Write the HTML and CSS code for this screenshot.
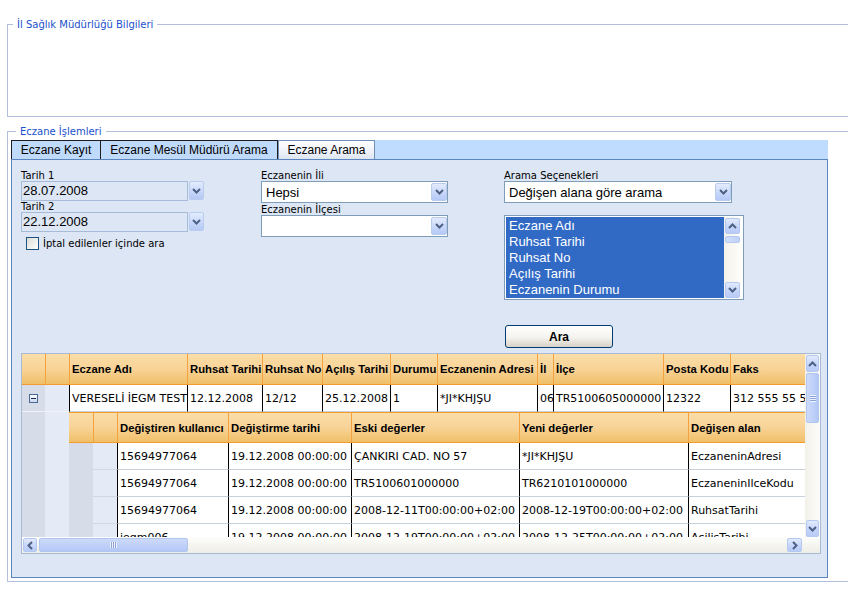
FILE: index.html
```html
<!DOCTYPE html>
<html lang="tr">
<head>
<meta charset="utf-8">
<title>Eczane Arama</title>
<link rel="stylesheet" href="styles.css">
</head>
<body>
<div class="page">
  <fieldset class="box">
    <legend>İl Sağlık Müdürlüğü Bilgileri</legend>
    <div class="box-top-body"></div>
  </fieldset>

  <fieldset class="box box-main">
    <legend>Eczane İşlemleri</legend>
    <div class="tabs">
      <div class="tab tab-kayit">Eczane Kayıt</div>
      <div class="tab tab-mesul">Eczane Mesül Müdürü Arama</div>
      <div class="tab tab-arama">Eczane Arama</div>
    </div>
    <div class="panel">
      <div class="form">
        <div class="col col1">
          <div class="lbl">Tarih 1</div>
          <div class="date-row">
            <div class="date-input">28.07.2008</div>
            <div class="ddbtn date-btn"><svg width="9" height="6" viewBox="0 0 9 6"><path d="M1 1l3.5 3.5L8 1" fill="none" stroke="#4D6185" stroke-width="2"/></svg></div>
          </div>
          <div class="lbl">Tarih 2</div>
          <div class="date-row">
            <div class="date-input">22.12.2008</div>
            <div class="ddbtn date-btn"><svg width="9" height="6" viewBox="0 0 9 6"><path d="M1 1l3.5 3.5L8 1" fill="none" stroke="#4D6185" stroke-width="2"/></svg></div>
          </div>
          <div class="check-row">
            <span class="checkbox"></span>
            <span class="lbl">İptal edilenler içinde ara</span>
          </div>
        </div>

        <div class="col col2">
          <div class="lbl">Eczanenin İli</div>
          <div class="sel sel-il">
            <span class="sel-text">Hepsi</span>
            <div class="ddbtn sel-btn"><svg width="9" height="6" viewBox="0 0 9 6"><path d="M1 1l3.5 3.5L8 1" fill="none" stroke="#4D6185" stroke-width="2"/></svg></div>
          </div>
          <div class="lbl lbl-gap">Eczanenin İlçesi</div>
          <div class="sel sel-il">
            <span class="sel-text"></span>
            <div class="ddbtn sel-btn"><svg width="9" height="6" viewBox="0 0 9 6"><path d="M1 1l3.5 3.5L8 1" fill="none" stroke="#4D6185" stroke-width="2"/></svg></div>
          </div>
        </div>

        <div class="col col3">
          <div class="lbl">Arama Seçenekleri</div>
          <div class="sel sel-arama">
            <span class="sel-text">Değişen alana göre arama</span>
            <div class="ddbtn sel-btn"><svg width="9" height="6" viewBox="0 0 9 6"><path d="M1 1l3.5 3.5L8 1" fill="none" stroke="#4D6185" stroke-width="2"/></svg></div>
          </div>
          <div class="listbox">
            <ul class="list-items">
              <li>Eczane Adı</li>
              <li>Ruhsat Tarihi</li>
              <li>Ruhsat No</li>
              <li>Açılış Tarihi</li>
              <li>Eczanenin Durumu</li>
            </ul>
            <div class="lb-scroll">
              <div class="sbtn lb-btn"><svg width="9" height="6" viewBox="0 0 9 6"><path d="M1 5l3.5-3.5L8 5" fill="none" stroke="#4D6185" stroke-width="2"/></svg></div>
              <div class="lb-thumb"></div>
              <div class="lb-track"></div>
              <div class="sbtn lb-btn"><svg width="9" height="6" viewBox="0 0 9 6"><path d="M1 1l3.5 3.5L8 1" fill="none" stroke="#4D6185" stroke-width="2"/></svg></div>
            </div>
          </div>
          <button class="ara-btn" type="button">Ara</button>
        </div>
      </div>

      <div class="grid">
        <div class="viewport">
          <table class="dg dg-main">
            <colgroup>
              <col class="w23"><col class="w24"><col class="w118"><col class="w75"><col class="w60"><col class="w68"><col class="w47"><col class="w100"><col class="w16"><col class="w110"><col class="w67"><col class="w100">
            </colgroup>
            <thead>
              <tr>
                <th class="first"></th><th></th><th>Eczane Adı</th><th>Ruhsat Tarihi</th><th>Ruhsat No</th><th>Açılış Tarihi</th><th>Durumu</th><th>Eczanenin Adresi</th><th>İl</th><th>İlçe</th><th>Posta Kodu</th><th>Faks</th>
              </tr>
            </thead>
            <tbody>
              <tr class="row-main">
                <td class="g0"><span class="minus"></span></td><td class="g1"></td>
                <td class="cell">VERESELİ İEGM TEST</td><td class="cell">12.12.2008</td><td class="cell">12/12</td><td class="cell">25.12.2008</td><td class="cell">1</td><td class="cell">*JI*KHJŞU</td><td class="cell">06</td><td class="cell">TR5100605000000</td><td class="cell">12322</td><td class="cell">312 555 55 55</td>
              </tr>
              <tr>
                <td class="g0 gfill"></td><td class="g1 gfill"></td>
                <td class="nest-cell" colspan="10">
                  <table class="dg dg-nested">
                    <colgroup>
                      <col class="w24"><col class="w24"><col class="w111"><col class="w123"><col class="w168"><col class="w169"><col class="w120">
                    </colgroup>
                    <thead>
                      <tr><th class="first"></th><th></th><th>Değiştiren kullanıcı</th><th>Değiştirme tarihi</th><th>Eski değerler</th><th>Yeni değerler</th><th>Değişen alan</th></tr>
                    </thead>
                    <tbody>
                      <tr><td class="g0"></td><td class="g1 sep"></td><td class="cell">15694977064</td><td class="cell">19.12.2008 00:00:00</td><td class="cell">ÇANKIRI CAD. NO 57</td><td class="cell">*JI*KHJŞU</td><td class="cell">EczaneninAdresi</td></tr>
                      <tr><td class="g0"></td><td class="g1 sep"></td><td class="cell">15694977064</td><td class="cell">19.12.2008 00:00:00</td><td class="cell">TR5100601000000</td><td class="cell">TR6210101000000</td><td class="cell">EczaneninIlceKodu</td></tr>
                      <tr><td class="g0"></td><td class="g1 sep"></td><td class="cell">15694977064</td><td class="cell">19.12.2008 00:00:00</td><td class="cell">2008-12-11T00:00:00+02:00</td><td class="cell">2008-12-19T00:00:00+02:00</td><td class="cell">RuhsatTarihi</td></tr>
                      <tr><td class="g0"></td><td class="g1 sep"></td><td class="cell">iegm006</td><td class="cell">19.12.2008 00:00:00</td><td class="cell">2008-12-19T00:00:00+02:00</td><td class="cell">2008-12-25T00:00:00+02:00</td><td class="cell">AcilisTarihi</td></tr>
                    </tbody>
                  </table>
                </td>
              </tr>
            </tbody>
          </table>
        </div>
        <div class="vscroll">
          <div class="sbtn v-btn"><svg width="9" height="6" viewBox="0 0 9 6"><path d="M1 5l3.5-3.5L8 5" fill="none" stroke="#4D6185" stroke-width="2"/></svg></div>
          <div class="v-thumb"><span class="grip-h"></span></div>
          <div class="v-track"></div>
          <div class="sbtn v-btn"><svg width="9" height="6" viewBox="0 0 9 6"><path d="M1 1l3.5 3.5L8 1" fill="none" stroke="#4D6185" stroke-width="2"/></svg></div>
        </div>
        <div class="hscroll">
          <div class="sbtn h-btn"><svg width="6" height="9" viewBox="0 0 6 9"><path d="M5 1L1.5 4.5 5 8" fill="none" stroke="#4D6185" stroke-width="2"/></svg></div>
          <div class="h-thumb"><span class="grip-v"></span></div>
          <div class="h-track"></div>
          <div class="sbtn h-btn h-btn-r"><svg width="6" height="9" viewBox="0 0 6 9"><path d="M1 1l3.5 3.5L1 8" fill="none" stroke="#4D6185" stroke-width="2"/></svg></div>
        </div>
        <div class="corner"></div>
      </div>
    </div>
  </fieldset>
</div>
</body>
</html>
```

FILE: styles.css
```css
* { box-sizing: border-box; }

html, body {
  margin: 0;
  padding: 0;
  background: #ffffff;
  overflow: hidden;
}

body {
  width: 848px;
  height: 602px;
  font-family: "DejaVu Sans", Verdana, sans-serif;
  font-size: 10px;
  color: #000;
}

.page {
  width: 900px;
  padding: 17px 0 0 7px;
}

/* fieldsets */
.box {
  width: 880px;
  min-width: 0;
  margin: 0;
  padding: 0;
  border: 1px solid #B4C0DB;
}

.box legend {
  margin-left: 5px;
  padding: 2px 4px 0;
  font-family: "DejaVu Sans", Verdana, sans-serif;
  font-size: 10px;
  line-height: 12px;
  color: #1B51CC;
}

.box-top-body { height: 85px; }

.box-main {
  margin-top: 7px;
  padding: 2px 0 3px 3px;
}

/* tabs */
.tabs {
  display: flex;
  width: 817px;
  height: 19px;
  background: #BFDBFE;
}

.tab {
  height: 19px;
  border: 1px solid #1E1E1E;
  border-bottom: none;
  background: #C0DAFB;
  font-family: "Liberation Sans", Arial, sans-serif;
  font-size: 12px;
  line-height: 18px;
  text-align: center;
  white-space: nowrap;
  color: #000;
}

.tab-kayit { width: 90px; }
.tab-mesul { width: 178px; margin-left: -1px; }
.tab-arama {
  width: 97px;
  border-color: #6F8FB8;
  background: linear-gradient(#FFFFFF, #EEF2F9 60%, #DDE5F2);
}

/* panel */
.panel {
  width: 817px;
  height: 419px;
  background: #DCE6F4;
  border: 1px solid #5A85BF;
  padding: 10px 0 0 9px;
}

.form { display: flex; }
.col1 { width: 240px; }
.col2 { width: 243px; }
.col3 { width: 240px; }

.lbl {
  font-size: 10px;
  line-height: 11px;
  white-space: nowrap;
}

.lbl-gap { margin-top: 1px; }

.date-row { display: flex; align-items: flex-start; }

.date-input {
  width: 167px;
  height: 20px;
  border: 1px solid #A6BBD8;
  background: #DCE6F4;
  padding-left: 1px;
  font-family: "Liberation Sans", Arial, sans-serif;
  font-size: 13px;
  line-height: 18px;
}

.ddbtn {
  display: flex;
  align-items: center;
  justify-content: center;
  border: 1px solid #B9CCEE;
  border-radius: 2px;
  background: linear-gradient(#E3ECFD, #C6D6FA 60%, #B5C9F6);
}

.date-btn {
  width: 15px;
  height: 19px;
  margin-left: 1px;
}

.check-row {
  display: flex;
  align-items: center;
  margin: 5px 0 0 5px;
  gap: 4px;
}

.checkbox {
  width: 13px;
  height: 13px;
  border: 1px solid #1C5180;
  background: linear-gradient(135deg, #DCDCD7, #FFFFFF);
}

.sel {
  display: flex;
  align-items: center;
  height: 22px;
  border: 1px solid #7F9DB9;
  background: #fff;
  padding: 0 0 0 4px;
}

.sel-il { width: 187px; }
.sel-arama { width: 228px; }

.sel-text {
  flex: 1;
  font-family: "Liberation Sans", Arial, sans-serif;
  font-size: 13px;
  white-space: nowrap;
}

.sel-btn {
  width: 16px;
  height: 18px;
}

/* listbox */
.listbox {
  display: flex;
  width: 240px;
  height: 85px;
  margin-top: 12px;
  border: 1px solid #7F9DB9;
  background: #fff;
  padding: 1px 2px 1px 1px;
}

.list-items {
  width: 218px;
  margin: 0;
  padding: 1px 0 0;
  list-style: none;
  background: #316AC5;
}

.list-items li {
  height: 16px;
  padding-left: 3px;
  font-family: "Liberation Sans", Arial, sans-serif;
  font-size: 13px;
  line-height: 16px;
  color: #fff;
  white-space: nowrap;
}

.lb-scroll {
  width: 17px;
  display: flex;
  flex-direction: column;
  padding: 1px 1px 0;
  background: linear-gradient(90deg, #F3F2EA, #FDFDFA);
}

.sbtn {
  display: flex;
  align-items: center;
  justify-content: center;
  border: 1px solid #B5C8EF;
  border-radius: 2px;
  background: linear-gradient(#E1EAFE, #C4D4FA 60%, #B8CBF7);
}

.lb-btn { height: 16px; }

.lb-thumb {
  height: 7px;
  margin-top: 2px;
  border: 1px solid #B5C8EF;
  border-radius: 2px;
  background: linear-gradient(90deg, #D2DEFB, #BFD0F8);
}

.lb-track { flex: 1; }

.ara-btn {
  display: block;
  width: 108px;
  height: 23px;
  margin: 25px 0 0 1px;
  padding: 0;
  border: 1px solid #003C74;
  border-radius: 3px;
  background: linear-gradient(#FFFFFF, #F4F3EE 55%, #D8D2C6);
  font-family: "Liberation Sans", Arial, sans-serif;
  font-size: 12px;
  font-weight: bold;
  color: #000;
}

/* grid */
.grid {
  display: grid;
  grid-template-columns: 783px 15px;
  grid-template-rows: 183px 16px;
  width: 800px;
  height: 201px;
  margin-top: 5px;
  border: 1px solid #A9BAD3;
  background: #fff;
}

.viewport {
  overflow: hidden;
  background: #E4EBF6;
}

.dg {
  border-collapse: separate;
  border-spacing: 0;
  table-layout: fixed;
}

.dg-main { width: 808px; }
.dg-nested { width: 739px; }

.w16 { width: 16px; }
.w23 { width: 23px; }
.w24 { width: 24px; }
.w47 { width: 47px; }
.w60 { width: 60px; }
.w67 { width: 67px; }
.w68 { width: 68px; }
.w75 { width: 75px; }
.w100 { width: 100px; }
.w110 { width: 110px; }
.w111 { width: 111px; }
.w118 { width: 118px; }
.w120 { width: 120px; }
.w123 { width: 123px; }
.w168 { width: 168px; }
.w169 { width: 169px; }

.dg th {
  height: 31px;
  padding: 0 1px 0 2px;
  text-align: left;
  vertical-align: middle;
  white-space: nowrap;
  overflow: hidden;
  font-family: "Liberation Sans", Arial, sans-serif;
  font-size: 11.3px;
  font-weight: bold;
  color: #000;
  background: linear-gradient(#FADDA8, #F8D397 50%, #F0BF68);
  border-left: 1px solid #F4A13E;
  border-bottom: 1px solid #F39B2C;
}

.dg-nested th { border-top: 1px solid #F39B2C; }

.dg th.first { border-left: none; }

.dg td {
  padding: 0;
  vertical-align: middle;
}

.dg td.cell {
  height: 27px;
  padding: 0 1px 0 2px;
  background: #fff;
  border-left: 1px solid #000;
  border-bottom: 1px solid #C9D1DD;
  white-space: nowrap;
  overflow: hidden;
  font-family: "DejaVu Sans", Verdana, sans-serif;
  font-size: 11px;
  color: #000;
}

.dg td.g0 { background: #D6DDE8; text-align: center; }
.dg td.g1 { background: #E4EBF6; }
.row-main td.g0, .row-main td.g1 { border-bottom: 1px solid #EEF2F8; }
.dg td.sep { border-bottom: 1px solid #D0D8E4; }
.dg td.gfill { vertical-align: top; }

.dg td.nest-cell {
  padding: 0;
  vertical-align: top;
}

.minus {
  display: inline-block;
  position: relative;
  width: 9px;
  height: 9px;
  border: 1px solid #4C6A97;
  background: linear-gradient(#FFFFFF, #C9D6EC);
  vertical-align: middle;
}

.minus::after {
  content: "";
  position: absolute;
  left: 1px;
  top: 3px;
  width: 5px;
  height: 1px;
  background: #1E2E50;
}

/* scrollbars */
.vscroll {
  display: flex;
  flex-direction: column;
  padding: 1px 1px 0 1px;
  background: linear-gradient(90deg, #F2F1E9, #FCFCF9);
}

.v-btn { height: 17px; }

.v-thumb {
  display: flex;
  align-items: center;
  justify-content: center;
  height: 50px;
  margin-top: 1px;
  border: 1px solid #B2C5EE;
  border-radius: 2px;
  background: linear-gradient(90deg, #CCDAFA, #BBCDF8 70%, #B3C7F6);
}

.grip-h {
  width: 6px;
  height: 7px;
  background: repeating-linear-gradient(#EEF3FE 0 1px, #8CA4D8 1px 2px);
}

.v-track { flex: 1; }

.hscroll {
  display: flex;
  align-items: stretch;
  padding: 1px 0 1px 1px;
  background: linear-gradient(#FDFDFB, #EEEDE5);
}

.h-btn { width: 14px; }
.h-btn-r { width: 15px; margin-right: 3px; }

.h-thumb {
  display: flex;
  align-items: center;
  justify-content: center;
  width: 149px;
  margin-left: 2px;
  border: 1px solid #B2C5EE;
  border-radius: 2px;
  background: linear-gradient(#CCDAFA, #BBCDF8 70%, #B3C7F6);
}

.grip-v {
  width: 7px;
  height: 6px;
  background: repeating-linear-gradient(90deg, #EEF3FE 0 1px, #8CA4D8 1px 2px);
}

.h-track { flex: 1; }

.corner {
  background: linear-gradient(#FDFDFB, #EEEDE5);
}
```
